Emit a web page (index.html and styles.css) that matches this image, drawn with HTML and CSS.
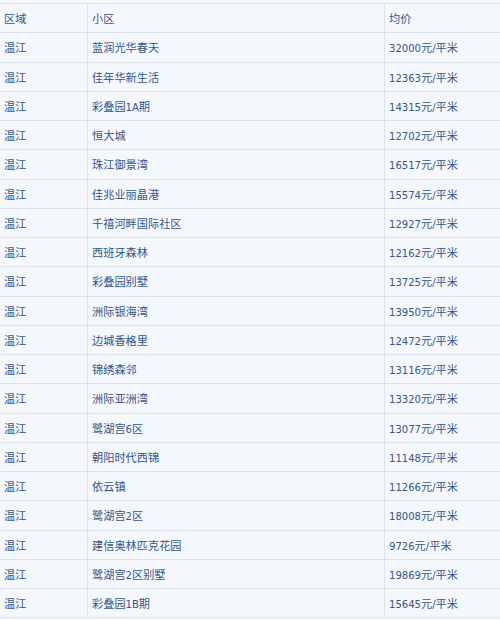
FILE: index.html
```html
<!DOCTYPE html>
<html lang="zh">
<head>
<meta charset="utf-8">
<link rel="stylesheet" href="styles.css">
</head>
<body>
<table class="price-table">
<tr><td class="c1">区域</td><td class="c2">小区</td><td class="c3">均价</td></tr>
<tr><td>温江</td><td>蓝润光华春天</td><td>32000元/平米</td></tr>
<tr><td>温江</td><td>佳年华新生活</td><td>12363元/平米</td></tr>
<tr><td>温江</td><td>彩叠园1A期</td><td>14315元/平米</td></tr>
<tr><td>温江</td><td>恒大城</td><td>12702元/平米</td></tr>
<tr><td>温江</td><td>珠江御景湾</td><td>16517元/平米</td></tr>
<tr><td>温江</td><td>佳兆业丽晶港</td><td>15574元/平米</td></tr>
<tr><td>温江</td><td>千禧河畔国际社区</td><td>12927元/平米</td></tr>
<tr><td>温江</td><td>西班牙森林</td><td>12162元/平米</td></tr>
<tr><td>温江</td><td>彩叠园别墅</td><td>13725元/平米</td></tr>
<tr><td>温江</td><td>洲际银海湾</td><td>13950元/平米</td></tr>
<tr><td>温江</td><td>边城香格里</td><td>12472元/平米</td></tr>
<tr><td>温江</td><td>锦绣森邻</td><td>13116元/平米</td></tr>
<tr><td>温江</td><td>洲际亚洲湾</td><td>13320元/平米</td></tr>
<tr><td>温江</td><td>鹭湖宫6区</td><td>13077元/平米</td></tr>
<tr><td>温江</td><td>朝阳时代西锦</td><td>11148元/平米</td></tr>
<tr><td>温江</td><td>依云镇</td><td>11266元/平米</td></tr>
<tr><td>温江</td><td>鹭湖宫2区</td><td>18008元/平米</td></tr>
<tr><td>温江</td><td>建信奥林匹克花园</td><td>9726元/平米</td></tr>
<tr><td>温江</td><td>鹭湖宫2区别墅</td><td>19869元/平米</td></tr>
<tr><td>温江</td><td>彩叠园1B期</td><td>15645元/平米</td></tr>
</table>
</body>
</html>
```
FILE: styles.css
```css
html, body {
  margin: 0;
  padding: 0;
  background: #f4f8fd;
}
body {
  padding-top: 3px;
  font-family: "DejaVu Sans Condensed", "DejaVu Sans", "Noto Sans CJK SC", sans-serif;
  font-size: 11.2px;
  color: #34558a;
}
.price-table {
  border-collapse: collapse;
  width: 500px;
  table-layout: fixed;
}
.price-table td {
  height: 28.25px;
  padding: 0 0 0 4px;
  border-top: 1px solid #dbe3ee;
  border-bottom: 1px solid #dbe3ee;
  border-left: 1px solid #dbe3ee;
  vertical-align: middle;
  white-space: nowrap;
}
.price-table td:first-child {
  border-left: none;
}
.c1 { width: 83px; }
.c2 { width: 292px; }
.c3 { width: auto; }
```
